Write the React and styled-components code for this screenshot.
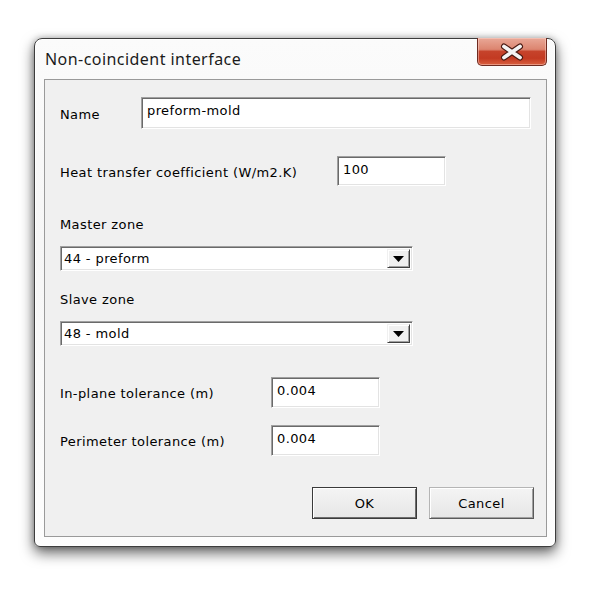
import React from 'react'
import styled, { createGlobalStyle } from 'styled-components'

const GlobalStyle = createGlobalStyle`
  html, body {
    margin: 0;
    padding: 0;
    background: #ffffff;
  }
`

const Page = styled.div`
  width: 591px;
  height: 589px;
  padding: 38px 0 0 34px;
  box-sizing: border-box;
  font-family: "DejaVu Sans", Tahoma, sans-serif;
`

const Window = styled.div`
  width: 522px;
  height: 509px;
  box-sizing: border-box;
  border: 1px solid #3d3d3d;
  border-radius: 8px 8px 6px 6px;
  background: linear-gradient(180deg, #fbfbfb 0%, #f6f6f6 40%, #fdfdfd 100%);
  box-shadow: 0 6px 14px rgba(0, 0, 0, 0.6), 0 0 6px rgba(0, 0, 0, 0.25),
    inset 0 0 0 1px rgba(255, 255, 255, 0.9);
  display: flex;
  flex-direction: column;
`

const TitleBar = styled.div`
  height: 40px;
  display: flex;
  align-items: flex-start;
  justify-content: space-between;
  padding-left: 10px;
`

const Title = styled.div`
  font-family: "Noto Sans", "Open Sans", sans-serif;
  font-size: 16px;
  letter-spacing: 0.45px;
  color: #1b1b1b;
  margin-top: 9px;
`

const CloseButton = styled.div`
  width: 70px;
  height: 28px;
  margin-top: -1px;
  margin-right: 8px;
  box-sizing: border-box;
  border: 1px solid #6e2a20;
  border-top: none;
  border-radius: 0 0 5px 5px;
  background: linear-gradient(
    180deg,
    #e9a897 0%,
    #dc8570 42%,
    #c6432b 50%,
    #c33a22 75%,
    #d9603f 100%
  );
  box-shadow: inset 0 0 0 1px rgba(255, 220, 210, 0.45);
  display: flex;
  align-items: center;
  justify-content: center;
`

const Client = styled.div`
  flex: 1;
  margin: 0 8px 9px 9px;
  border: 1px solid #9a9a9a;
  background: #f0f0f0;
  padding: 17px 15px 17px 15px;
  display: flex;
  flex-direction: column;
  font-size: 13px;
  letter-spacing: 0.4px;
  color: #000;
`

const Row = styled.div`
  display: flex;
  align-items: center;
  margin-top: ${p => p.$gap || 0}px;
`

const Label = styled.div`
  width: ${p => (p.$width ? `${p.$width}px` : 'auto')};
  flex-shrink: 0;
  line-height: 16px;
  padding-top: ${p => (p.$width ? 3 : 1)}px;
  margin-top: ${p => (p.$gap || 0) - (p.$width ? 0 : 1)}px;
`

const TextBox = styled.div`
  box-sizing: border-box;
  width: ${p => (p.$width ? `${p.$width}px` : 'auto')};
  flex: ${p => (p.$width ? '0 0 auto' : '1')};
  height: ${p => p.$height}px;
  background: #fff;
  border: 1px solid;
  border-color: #a0a0a0 #ffffff #ffffff #a0a0a0;
  box-shadow: inset 1px 1px 0 #6a6a6a, inset -1px -1px 0 #e3e3e3;
  padding: 5px 5px 3px 5px;
  line-height: 16px;
`

const Select = styled.div`
  box-sizing: border-box;
  width: 353px;
  height: 25px;
  margin-top: 13px;
  background: #fff;
  border: 1px solid;
  border-color: #a0a0a0 #ffffff #ffffff #a0a0a0;
  box-shadow: inset 1px 1px 0 #6a6a6a, inset -1px -1px 0 #e3e3e3;
  padding: 2px 2px 2px 3px;
  display: flex;
  align-items: center;
  justify-content: space-between;
`

const SelectValue = styled.span`
  line-height: 16px;
  padding-top: 1px;
`

const DropButton = styled.div`
  width: 23px;
  height: 19px;
  box-sizing: border-box;
  background: #f0f0f0;
  border: 1px solid;
  border-color: #f0f0f0 #404040 #404040 #f0f0f0;
  box-shadow: inset 1px 1px 0 #ffffff, inset -1px -1px 0 #a0a0a0;
  display: flex;
  align-items: center;
  justify-content: center;
`

const ButtonRow = styled.div`
  display: flex;
  justify-content: flex-end;
  gap: 12px;
  margin-top: 31px;
  margin-right: -3px;
`

const Button = styled.div`
  width: 105px;
  height: 32px;
  box-sizing: border-box;
  padding-top: 1px;
  background: linear-gradient(180deg, #f4f4f4 0%, #ededed 50%, #e6e6e6 100%);
  border: 1px solid;
  border-color: ${p => (p.$default ? '#3a3a3a' : '#b5b5b5 #5a5a5a #5a5a5a #b5b5b5')};
  box-shadow: ${p =>
    p.$default
      ? 'inset 1px 1px 0 #fff, inset -1px -1px 0 #6d6d6d'
      : 'inset 1px 1px 0 #fff, inset -1px -1px 0 #a0a0a0'};
  display: flex;
  align-items: center;
  justify-content: center;
`

function CloseIcon() {
  return (
    <svg width="28" height="18" viewBox="0 0 28 18">
      <path d="M6 3.5 L22 14.5 M22 3.5 L6 14.5" stroke="#4a1a12" strokeWidth="6" strokeLinecap="round" />
      <path d="M6 3.5 L22 14.5 M22 3.5 L6 14.5" stroke="#f4f4f4" strokeWidth="3.8" strokeLinecap="round" />
    </svg>
  )
}

function Arrow() {
  return (
    <svg width="11" height="6" viewBox="0 0 11 6">
      <path d="M0 0 H11 L5.5 6 Z" fill="#000" />
    </svg>
  )
}

export default function App() {
  return (
    <Page>
      <GlobalStyle />
      <Window>
        <TitleBar>
          <Title>Non-coincident interface</Title>
          <CloseButton>
            <CloseIcon />
          </CloseButton>
        </TitleBar>
        <Client>
          <Row>
            <Label $width={81}>Name</Label>
            <TextBox $height={32}>preform-mold</TextBox>
          </Row>
          <Row $gap={27}>
            <Label $width={277}>Heat transfer coefficient (W/m2.K)</Label>
            <TextBox $width={109} $height={30}>100</TextBox>
          </Row>
          <Label $gap={31}>Master zone</Label>
          <Select>
            <SelectValue>44 - preform</SelectValue>
            <DropButton>
              <Arrow />
            </DropButton>
          </Select>
          <Label $gap={21}>Slave zone</Label>
          <Select>
            <SelectValue>48 - mold</SelectValue>
            <DropButton>
              <Arrow />
            </DropButton>
          </Select>
          <Row $gap={31}>
            <Label $width={211}>In-plane tolerance (m)</Label>
            <TextBox $width={109} $height={31}>0.004</TextBox>
          </Row>
          <Row $gap={17}>
            <Label $width={211}>Perimeter tolerance (m)</Label>
            <TextBox $width={109} $height={31}>0.004</TextBox>
          </Row>
          <ButtonRow>
            <Button $default>OK</Button>
            <Button>Cancel</Button>
          </ButtonRow>
        </Client>
      </Window>
    </Page>
  )
}
